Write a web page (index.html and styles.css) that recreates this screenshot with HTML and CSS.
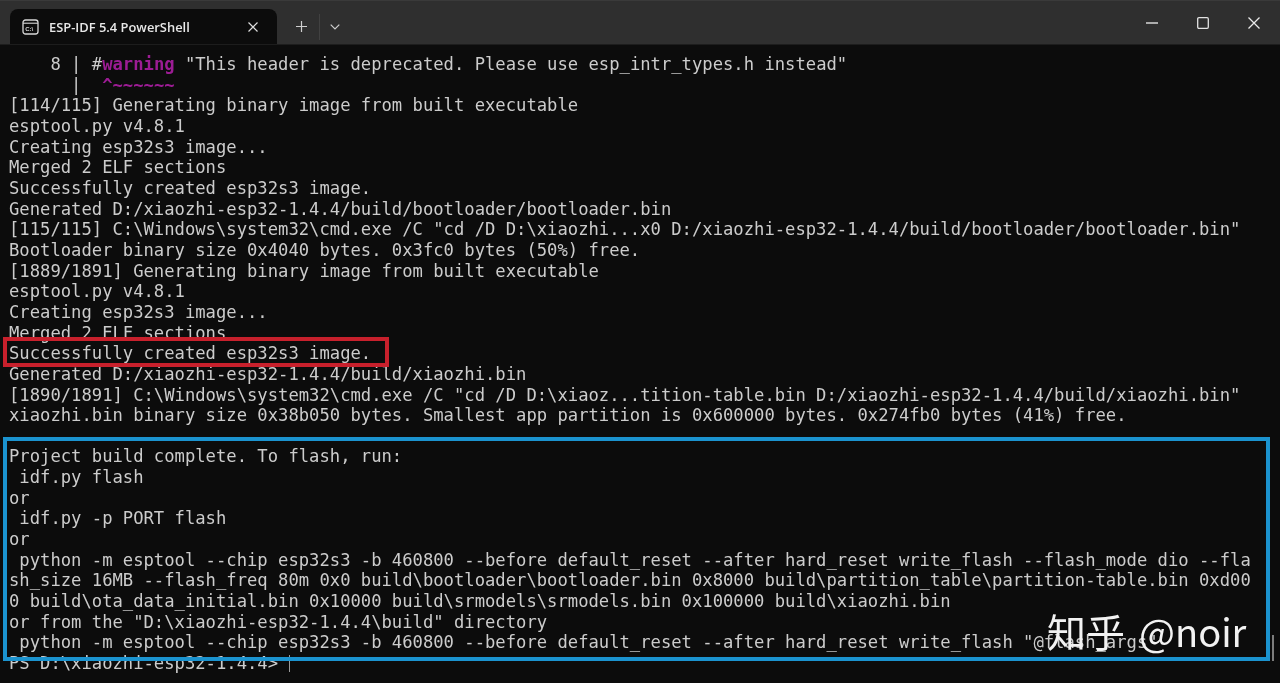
FILE: index.html
```html
<!DOCTYPE html>
<html lang="en">
<head>
<meta charset="utf-8">
<title>ESP-IDF 5.4 PowerShell</title>
<link rel="stylesheet" href="styles.css">
</head>
<body>
<div class="window">
  <header class="titlebar">
    <div class="tab">
      <svg class="tab-icon" width="17" height="16" viewBox="0 0 17 16"><rect x="1" y="1" width="15" height="14" rx="2.5" fill="none" stroke="#d8d8d8" stroke-width="1.3"/><path d="M1 4.2h15" stroke="#d8d8d8" stroke-width="1.1"/><text x="3.2" y="11.6" class="icon-text">C:\</text></svg>
      <span class="tab-title">ESP-IDF 5.4 PowerShell</span>
      <svg class="tab-close" width="10" height="10" viewBox="0 0 10 10"><path d="M.5.5l9 9M9.5.5l-9 9" stroke="#dedede" stroke-width="1.2" fill="none"/></svg>
    </div>
    <div class="tab-actions">
      <svg class="new-tab" width="11" height="11" viewBox="0 0 11 11"><path d="M5.5 0v11M0 5.5h11" stroke="#cfcfcf" stroke-width="1.2"/></svg>
      <span class="divider"></span>
      <svg width="10" height="6" viewBox="0 0 10 6"><path d="M.7.7L5 5l4.3-4.3" stroke="#cfcfcf" stroke-width="1.2" fill="none"/></svg>
    </div>
    <div class="window-controls">
      <svg width="12" height="12" viewBox="0 0 12 12"><path d="M0 6h12" stroke="#e2e2e2" stroke-width="1.4"/></svg>
      <svg width="12" height="12" viewBox="0 0 12 12"><rect x=".7" y=".7" width="10.6" height="10.6" rx="1.2" fill="none" stroke="#e2e2e2" stroke-width="1.3"/></svg>
      <svg width="12" height="12" viewBox="0 0 12 12"><path d="M.5.5l11 11M11.5.5l-11 11" stroke="#eaeaea" stroke-width="1.3" fill="none"/></svg>
    </div>
  </header>
  <main class="terminal">
<pre class="output">    8 | #<span class="magenta">warning</span> "This header is deprecated. Please use esp_intr_types.h instead"
      |  <span class="magenta">^~~~~~~</span>
[114/115] Generating binary image from built executable
esptool.py v4.8.1
Creating esp32s3 image...
Merged 2 ELF sections
Successfully created esp32s3 image.
Generated D:/xiaozhi-esp32-1.4.4/build/bootloader/bootloader.bin
[115/115] C:\Windows\system32\cmd.exe /C "cd /D D:\xiaozhi...x0 D:/xiaozhi-esp32-1.4.4/build/bootloader/bootloader.bin"
Bootloader binary size 0x4040 bytes. 0x3fc0 bytes (50%) free.
[1889/1891] Generating binary image from built executable
esptool.py v4.8.1
Creating esp32s3 image...
Merged 2 ELF sections
Successfully created esp32s3 image.
Generated D:/xiaozhi-esp32-1.4.4/build/xiaozhi.bin
[1890/1891] C:\Windows\system32\cmd.exe /C "cd /D D:\xiaoz...tition-table.bin D:/xiaozhi-esp32-1.4.4/build/xiaozhi.bin"
xiaozhi.bin binary size 0x38b050 bytes. Smallest app partition is 0x600000 bytes. 0x274fb0 bytes (41%) free.

Project build complete. To flash, run:
 idf.py flash
or
 idf.py -p PORT flash
or
 python -m esptool --chip esp32s3 -b 460800 --before default_reset --after hard_reset write_flash --flash_mode dio --fla
sh_size 16MB --flash_freq 80m 0x0 build\bootloader\bootloader.bin 0x8000 build\partition_table\partition-table.bin 0xd00
0 build\ota_data_initial.bin 0x10000 build\srmodels\srmodels.bin 0x100000 build\xiaozhi.bin
or from the "D:\xiaozhi-esp32-1.4.4\build" directory
 python -m esptool --chip esp32s3 -b 460800 --before default_reset --after hard_reset write_flash "@flash_args"
PS D:\xiaozhi-esp32-1.4.4&gt; <span class="cursor"></span></pre>
    <div class="mark mark-red"></div>
    <div class="mark mark-blue"></div>
    <div class="scrollbar"></div>
    <div class="watermark"><span>知乎</span><span class="handle">@noir</span></div>
  </main>
</div>
</body>
</html>
```
FILE: styles.css
```css
* { box-sizing: border-box; }
html, body { margin: 0; height: 100%; overflow: hidden; background: #0b0b0b; }
.window { display: flex; flex-direction: column; height: 683px; width: 1280px; filter: blur(0.4px); }

.titlebar {
  display: flex; align-items: flex-end; height: 44px; flex: none;
  background: #2f2f2f; padding-left: 10px; border-top: 1px solid #3a3a3a;
}
.tab {
  display: flex; align-items: center; width: 267px; height: 35px;
  background: #0c0c0c; border-radius: 8px 8px 0 0; padding: 0 0 0 12px;
  font: 600 12.9px "Open Sans", "Noto Sans", sans-serif; color: #e8e8e8;
}
.tab-icon { flex: none; }
.icon-text { font: 700 6px "Liberation Sans", sans-serif; fill: #d8d8d8; }
.tab-title { margin-left: 10px; flex: 1; white-space: nowrap; }
.tab-close { flex: none; margin-right: 19px; }
.tab-actions { display: flex; align-items: center; height: 35px; padding-left: 19px; }
.divider { width: 1px; height: 26px; background: #414141; margin: 0 10px 0 12px; }
.window-controls { display: flex; align-items: center; gap: 39px; height: 43px; margin-left: auto; margin-right: 20px; align-self: flex-start; }

.terminal { position: relative; flex: 1; background: #0c0c0c; overflow: hidden; border-top: 1px solid #1d1d1d; }
.output {
  margin: 0; padding: 9px 0 0 9px;
  font: 17.2px/20.66px "DejaVu Sans Mono", monospace;
  color: #cccccc; white-space: pre;
}
.magenta { color: #9c1c94; font-weight: 700; }
.cursor { display: inline-block; width: 1px; height: 17px; background: #9a9a9a; vertical-align: -3px; margin-left: 1px; }

.mark { position: absolute; pointer-events: none; }
.mark-red { left: 3px; top: 292px; width: 386px; height: 30px; border: 4px solid #c8202c; }
.mark-blue { left: 3px; top: 392px; width: 1267px; height: 224px; border: 4px solid #1b93cf; }
.scrollbar { position: absolute; left: 1272px; top: 590px; width: 2px; height: 26px; background: #7d7d7d; }
.watermark {
  position: absolute; left: 1047px; top: 559px; white-space: nowrap;
  font: 39px/52px "Noto Sans CJK SC", "Noto Sans", sans-serif; color: #f2f2f2;
}
.handle { margin-left: 14px; font-size: 38px; }
```
